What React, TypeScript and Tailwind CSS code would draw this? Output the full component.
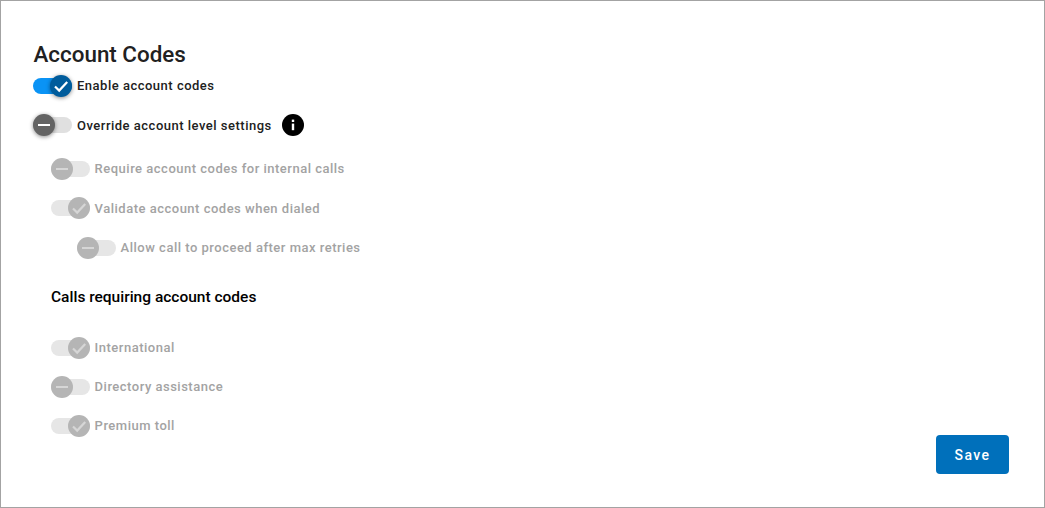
import React from "react";

function Toggle({ on, tone }: { on: boolean; tone: "active" | "dark" | "disabled" }) {
  const track = tone === "active" ? "bg-[#0a93f5]" : tone === "dark" ? "bg-[#e0e0e0]" : "bg-[#e6e6e6]";
  const thumb =
    tone === "active"
      ? "bg-[#005c9c] shadow-[0_1px_4px_rgba(0,0,0,0.45)]"
      : tone === "dark"
        ? "bg-[#636363] shadow-[0_1px_4px_rgba(0,0,0,0.45)]"
        : "bg-[#b5b5b5]";
  const mark = tone === "disabled" ? "#d6d6d6" : "#ffffff";
  return (
    <span className="flex h-[22px] w-[39px] shrink-0 items-center">
      <span className={`flex h-[16px] w-full items-center rounded-full ${track} ${on ? "justify-end" : "justify-start"}`}>
        <span className={`flex h-[22px] w-[22px] items-center justify-center rounded-full ${thumb}`}>
          <svg width="22" height="22" viewBox="0 0 22 22" fill="none">
            {on ? (
              <path d="M5 11.5 L9.2 15.6 L17.2 7" stroke={mark} strokeWidth="2.2" />
            ) : (
              <path d="M5 11 H17" stroke={mark} strokeWidth="2" />
            )}
          </svg>
        </span>
      </span>
    </span>
  );
}

function Row({
  label,
  on,
  tone,
  className,
  labelClass = "",
  children,
}: {
  label: string;
  on: boolean;
  tone: "active" | "dark" | "disabled";
  className: string;
  labelClass?: string;
  children?: React.ReactNode;
}) {
  const text = tone === "disabled" ? "text-[#a3a3a3]" : "text-[#212121]";
  const gap = tone === "disabled" ? "ml-[4.6px]" : "ml-[5px]";
  return (
    <div className={`flex h-[22px] items-center ${className}`}>
      <Toggle on={on} tone={tone} />
      <span className={`${gap} h-[22px] text-[13px] font-medium leading-[22px] tracking-[0.5px] ${text} ${labelClass}`}>{label}</span>
      {children}
    </div>
  );
}

export default function App() {
  return (
    <div className="flex h-[508px] w-[1045px] border border-[#a3a3a3] bg-white font-['Roboto',sans-serif]">
      <div className="flex flex-1 flex-col pl-[32px] pt-[41px]">
        <h1 className="h-[24px] pl-[0.5px] text-[22.4px] font-medium leading-[24px] text-[#212121]">Account Codes</h1>
        <Row className="mt-[9px]" label="Enable account codes" on tone="active" />
        <Row className="mt-[17px]" labelClass="pt-[1px]" label="Override account level settings" on={false} tone="dark">
          <span className="ml-[10.6px] flex h-[22px] w-[22px] items-center justify-center rounded-full bg-black">
            <svg width="22" height="22" viewBox="0 0 22 22" fill="white">
              <rect x="9.8" y="5.6" width="2.4" height="2.4" />
              <rect x="9.8" y="9.6" width="2.4" height="6.6" />
            </svg>
          </span>
        </Row>
        <div className="flex flex-col pl-[18px]">
          <Row className="mt-[22px]" label="Require account codes for internal calls" on={false} tone="disabled" />
          <Row className="mt-[17px]" labelClass="pt-[1px]" label="Validate account codes when dialed" on tone="disabled" />
          <Row className="ml-[26px] mt-[18px]" label="Allow call to proceed after max retries" on={false} tone="disabled" />
          <h2 className="mt-[27px] h-[22px] text-[15.5px] font-medium leading-[22px] text-black">Calls requiring account codes</h2>
          <Row className="mt-[29px]" label="International" on tone="disabled" />
          <Row className="mt-[17px]" label="Directory assistance" on={false} tone="disabled" />
          <Row className="mt-[17px]" label="Premium toll" on tone="disabled" />
        </div>
      </div>
      <button className="mb-[33px] mr-[35px] h-[39px] w-[73px] self-end rounded-[4px] bg-[#0070bb] pt-[2px] text-[14px] font-medium tracking-[1.4px] text-white">
        Save
      </button>
    </div>
  );
}
